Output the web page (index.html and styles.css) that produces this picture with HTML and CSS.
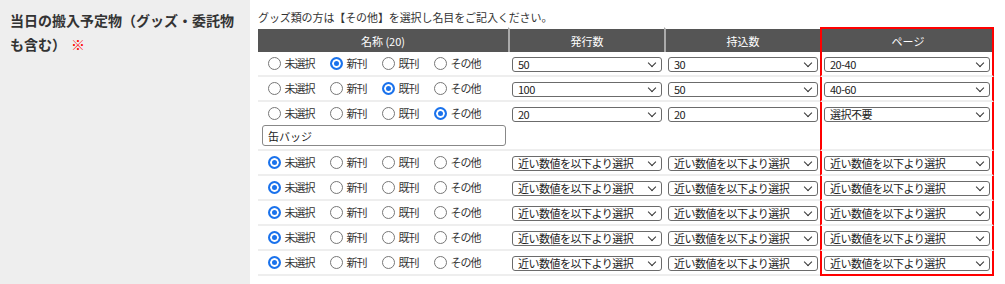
FILE: index.html
```html
<!DOCTYPE html>
<html lang="ja">
<head>
    <meta charset="UTF-8">
    <title>搬入予定物</title>
    <link rel="stylesheet" href="styles.css">
</head>
<body>
<div class="page">
    <div class="label_col">
        <p class="label">当日の搬入予定物（グッズ・委託物も含む）<span class="req">※</span></p>
    </div>
    <div class="field">
        <p class="note">グッズ類の方は【その他】を選択し名目をご記入ください。</p>
        <table class="items">
            <colgroup>
                <col class="c_name">
                <col class="c_num">
                <col class="c_num">
                <col class="c_page">
            </colgroup>
            <thead>
            <tr>
                <th>名称 (20)</th>
                <th>発行数</th>
                <th>持込数</th>
                <th class="pg">ページ</th>
            </tr>
            </thead>
            <tbody>
            <tr>
                <td class="name">
                    <label class="opt"><input type="radio" name="k1">未選択</label>
                    <label class="opt"><input type="radio" name="k1" checked>新刊</label>
                    <label class="opt"><input type="radio" name="k1">既刊</label>
                    <label class="opt"><input type="radio" name="k1">その他</label>
                </td>
                <td><span class="sel"><select><option>50</option></select></span></td>
                <td><span class="sel"><select><option>30</option></select></span></td>
                <td class="pg"><span class="sel"><select><option>20-40</option></select></span></td>
            </tr>
            <tr>
                <td class="name">
                    <label class="opt"><input type="radio" name="k2">未選択</label>
                    <label class="opt"><input type="radio" name="k2">新刊</label>
                    <label class="opt"><input type="radio" name="k2" checked>既刊</label>
                    <label class="opt"><input type="radio" name="k2">その他</label>
                </td>
                <td><span class="sel"><select><option>100</option></select></span></td>
                <td><span class="sel"><select><option>50</option></select></span></td>
                <td class="pg"><span class="sel"><select><option>40-60</option></select></span></td>
            </tr>
            <tr>
                <td class="name">
                    <label class="opt"><input type="radio" name="k3">未選択</label>
                    <label class="opt"><input type="radio" name="k3">新刊</label>
                    <label class="opt"><input type="radio" name="k3">既刊</label>
                    <label class="opt"><input type="radio" name="k3" checked>その他</label>
                    <input type="text" class="other" value="缶バッジ">
                </td>
                <td><span class="sel"><select><option>20</option></select></span></td>
                <td><span class="sel"><select><option>20</option></select></span></td>
                <td class="pg"><span class="sel"><select><option>選択不要</option></select></span></td>
            </tr>
            <tr>
                <td class="name">
                    <label class="opt"><input type="radio" name="k4" checked>未選択</label>
                    <label class="opt"><input type="radio" name="k4">新刊</label>
                    <label class="opt"><input type="radio" name="k4">既刊</label>
                    <label class="opt"><input type="radio" name="k4">その他</label>
                </td>
                <td><span class="sel"><select><option>近い数値を以下より選択</option></select></span></td>
                <td><span class="sel"><select><option>近い数値を以下より選択</option></select></span></td>
                <td class="pg"><span class="sel"><select><option>近い数値を以下より選択</option></select></span></td>
            </tr>
            <tr>
                <td class="name">
                    <label class="opt"><input type="radio" name="k5" checked>未選択</label>
                    <label class="opt"><input type="radio" name="k5">新刊</label>
                    <label class="opt"><input type="radio" name="k5">既刊</label>
                    <label class="opt"><input type="radio" name="k5">その他</label>
                </td>
                <td><span class="sel"><select><option>近い数値を以下より選択</option></select></span></td>
                <td><span class="sel"><select><option>近い数値を以下より選択</option></select></span></td>
                <td class="pg"><span class="sel"><select><option>近い数値を以下より選択</option></select></span></td>
            </tr>
            <tr>
                <td class="name">
                    <label class="opt"><input type="radio" name="k6" checked>未選択</label>
                    <label class="opt"><input type="radio" name="k6">新刊</label>
                    <label class="opt"><input type="radio" name="k6">既刊</label>
                    <label class="opt"><input type="radio" name="k6">その他</label>
                </td>
                <td><span class="sel"><select><option>近い数値を以下より選択</option></select></span></td>
                <td><span class="sel"><select><option>近い数値を以下より選択</option></select></span></td>
                <td class="pg"><span class="sel"><select><option>近い数値を以下より選択</option></select></span></td>
            </tr>
            <tr>
                <td class="name">
                    <label class="opt"><input type="radio" name="k7" checked>未選択</label>
                    <label class="opt"><input type="radio" name="k7">新刊</label>
                    <label class="opt"><input type="radio" name="k7">既刊</label>
                    <label class="opt"><input type="radio" name="k7">その他</label>
                </td>
                <td><span class="sel"><select><option>近い数値を以下より選択</option></select></span></td>
                <td><span class="sel"><select><option>近い数値を以下より選択</option></select></span></td>
                <td class="pg"><span class="sel"><select><option>近い数値を以下より選択</option></select></span></td>
            </tr>
            <tr class="last">
                <td class="name">
                    <label class="opt"><input type="radio" name="k8" checked>未選択</label>
                    <label class="opt"><input type="radio" name="k8">新刊</label>
                    <label class="opt"><input type="radio" name="k8">既刊</label>
                    <label class="opt"><input type="radio" name="k8">その他</label>
                </td>
                <td><span class="sel"><select><option>近い数値を以下より選択</option></select></span></td>
                <td><span class="sel"><select><option>近い数値を以下より選択</option></select></span></td>
                <td class="pg"><span class="sel"><select><option>近い数値を以下より選択</option></select></span></td>
            </tr>
            </tbody>
        </table>
    </div>
</div>
</body>
</html>
```

FILE: styles.css
```css
* {
    margin: 0;
    padding: 0;
    box-sizing: border-box;
}

body {
    font-family: "Noto Sans CJK JP", "Noto Sans", sans-serif;
    color: #333;
    background-color: #fff;
}

.page {
    display: flex;
    height: 284px;
}

.label_col {
    width: 250px;
    flex-shrink: 0;
    background-color: #eee;
    padding: 8px 10px;
}

.label {
    font-size: 14px;
    font-weight: bold;
    line-height: 24px;
}

.req {
    display: inline-block;
    color: #f00;
    font-weight: normal;
    margin-left: 5px;
}

.field {
    padding: 9px 0 0 8px;
}

.note {
    font-size: 11px;
    line-height: 16px;
    margin-bottom: 2px;
    letter-spacing: -0.1px;
}

.items {
    border-collapse: separate;
    border-spacing: 0;
    table-layout: fixed;
    width: 736px;
}

.c_name {
    width: 250px;
}

.c_num {
    width: 156px;
}

.c_page {
    width: 174px;
}

.items th {
    height: 25px;
    background-color: #555;
    background-clip: padding-box;
    border-top: 2px solid #fff;
    color: #fff;
    font-size: 11px;
    font-weight: normal;
    text-align: center;
}

.items th + th {
    border-left: 2px solid #aaa;
}

.items td {
    vertical-align: top;
    padding: 5px 2px 3px;
    border-bottom: 2px solid #eee;
}

.items td + td {
    padding-left: 4px;
}

.items .pg,
.items th.pg {
    border-left: 2px solid #f00;
    border-right: 2px solid #f00;
    padding-left: 2px;
}

.items th.pg {
    border-top: 2px solid #f00;
}

.items .last td.pg {
    border-bottom: 2px solid #f00;
}

.items td.name {
    padding-top: 3px;
    padding-right: 20px;
    text-align: center;
    font-size: 0;
}

.opt {
    display: inline-block;
    font-size: 11px;
    letter-spacing: -1px;
    line-height: 17px;
    margin-right: 15px;
}

.opt:last-of-type {
    margin-right: 0;
}

.opt input {
    appearance: none;
    -webkit-appearance: none;
    width: 13px;
    height: 13px;
    margin: 0 4px 0 0;
    border: 1px solid #777;
    border-radius: 50%;
    background-color: #fff;
    vertical-align: -2px;
}

.opt input:checked {
    border: 2px solid #1a72ec;
    background-color: #1a72ec;
    box-shadow: inset 0 0 0 2px #fff;
}

.other {
    display: block;
    width: 244px;
    height: 21px;
    margin: 3px 0 0 2px;
    border: 1px solid #888;
    border-radius: 3px;
    padding: 0 5px;
    font-family: inherit;
    font-size: 11px;
    color: #222;
    text-align: left;
}

.sel {
    position: relative;
    display: block;
}

.sel select {
    appearance: none;
    -webkit-appearance: none;
    display: block;
    width: 100%;
    height: 15px;
    border: 1px solid #6b6b6b;
    border-radius: 3px;
    background-color: #fff;
    padding: 0 16px 0 5px;
    font-family: inherit;
    font-size: 11px;
    letter-spacing: -0.5px;
    line-height: 13px;
    color: #222;
}

.sel::after {
    content: "";
    position: absolute;
    right: 7px;
    top: 3px;
    width: 5px;
    height: 5px;
    border-right: 1px solid #333;
    border-bottom: 1px solid #333;
    transform: rotate(45deg);
    pointer-events: none;
}
```
